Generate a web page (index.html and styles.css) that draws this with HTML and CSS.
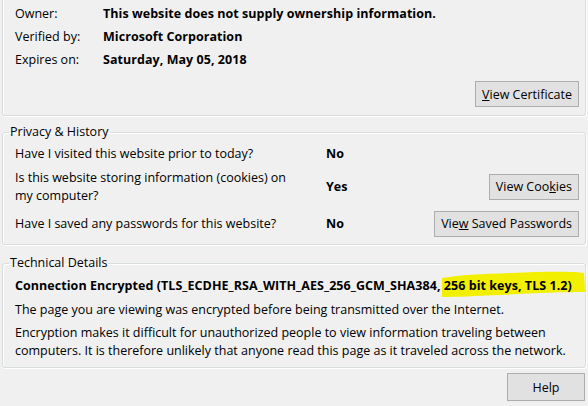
FILE: index.html
```html
<!DOCTYPE html>
<html>
<head>
<meta charset="utf-8">
<link rel="stylesheet" href="styles.css">
</head>
<body>
<div class="dialog">
  <fieldset class="group group-top">
    <div class="info">
      <span class="label">Owner:</span><span class="value">This website does not supply ownership information.</span>
      <span class="label">Verified by:</span><span class="value">Microsoft Corporation</span>
      <span class="label">Expires on:</span><span class="value">Saturday, May 05, 2018</span>
    </div>
    <div class="actions">
      <button class="btn"><u>V</u>iew Certificate</button>
    </div>
  </fieldset>

  <fieldset class="group group-privacy">
    <legend>Privacy &amp; History</legend>
    <div class="privacy">
      <span class="q">Have I visited this website prior to today?</span>
      <span class="a">No</span>
      <span class="c"></span>

      <span class="q">Is this website storing information (cookies) on<br>my computer?</span>
      <span class="a">Yes</span>
      <span class="c"><button class="btn">View Coo<u>k</u>ies</button></span>

      <span class="q">Have I saved any passwords for this website?</span>
      <span class="a">No</span>
      <span class="c"><button class="btn">Vie<u>w</u> Saved Passwords</button></span>
    </div>
  </fieldset>

  <fieldset class="group group-tech">
    <legend>Technical Details</legend>
    <p class="conn">Connection Encrypted (TLS_ECDHE_RSA_WITH_AES_256_GCM_SHA384, <span class="hl">256 bit keys, TLS 1.2)<svg class="marker" viewBox="0 0 144 27" preserveAspectRatio="none"><path d="M1 7 C20 4 40 3 70 2 C100 1 125 0 143 2 L144 21 C120 21 90 22 60 24 C35 25 15 26 1 26 Z" fill="#f2f000"/></svg></span></p>
    <p>The page you are viewing was encrypted before being transmitted over the Internet.</p>
    <p>Encryption makes it difficult for unauthorized people to view information traveling between<br>computers. It is therefore unlikely that anyone read this page as it traveled across the network.</p>
  </fieldset>

  <div class="footer">
    <button class="btn btn-help">Help</button>
  </div>
</div>
</body>
</html>
```

FILE: styles.css
```css
html, body {
  margin: 0;
  padding: 0;
  background: #f0f0f0;
}
body {
  width: 588px;
  height: 406px;
  overflow: hidden;
  font-family: "Open Sans", "Noto Sans", sans-serif;
  font-size: 12.5px;
  color: #000;
}
.dialog {
  display: flex;
  flex-direction: column;
}
.group {
  margin: 0 2px;
  border: 1px solid #d8dde0;
  border-radius: 3px;
  box-shadow: inset 1px 1px 0 #fff, 1px 1px 0 #fff;
  padding: 0 6px 0 12px;
  min-width: 0;
  box-sizing: border-box;
}
.group legend {
  padding: 0 1px;
  margin-left: -6px;
  line-height: 16px;
  color: #000;
}
.group-top {
  border-top: none;
  border-radius: 0 0 3px 3px;
  margin-top: -1px;
  padding-top: 6px;
  height: 117px;
}
.info {
  display: grid;
  grid-template-columns: 88px 1fr;
  row-gap: 5px;
  line-height: 18px;
}
.value, .a, .conn {
  font-weight: bold;
  letter-spacing: 0.05px;
}
.actions {
  display: flex;
  justify-content: flex-end;
  margin-top: 12px;
}
.btn {
  font: inherit;
  color: #000;
  background: #e1e1e1;
  border: 1px solid #adadad;
  height: 26px;
  padding: 0 6px;
  margin: 0;
}
.group-privacy {
  margin-top: 8px;
  height: 121px;
}
.privacy {
  display: grid;
  grid-template-columns: 311px 60px 1fr;
  align-items: center;
  row-gap: 6px;
  line-height: 18px;
  padding-top: 5px;
}
.c {
  display: flex;
  justify-content: flex-end;
}
.group-tech {
  margin-top: 10px;
  height: 113px;
}
.group-tech p {
  margin: 0 0 5px 0;
  line-height: 18px;
}
.group-tech p.conn {
  padding-top: 6px;
  margin-bottom: 6px;
}
.hl {
  position: relative;
  z-index: 0;
}
.marker {
  position: absolute;
  z-index: -1;
  left: -3px;
  top: -6px;
  height: 27px;
  width: calc(100% + 16px);
}
.footer {
  display: flex;
  justify-content: flex-end;
  padding: 5px 3px 0 0;
}
.btn-help {
  width: 78px;
  height: 28px;
}
```
